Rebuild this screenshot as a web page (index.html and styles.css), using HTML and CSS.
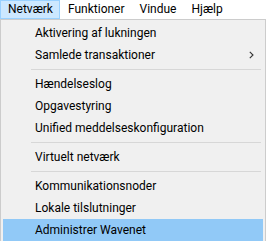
FILE: index.html
```html
<!DOCTYPE html>
<html lang="da">
<head>
<meta charset="utf-8">
<link rel="stylesheet" href="styles.css">
</head>
<body>
<div class="menubar">
  <span class="top active">Netværk</span>
  <span class="top">Funktioner</span>
  <span class="top">Vindue</span>
  <span class="top">Hjælp</span>
</div>
<div class="menu">
  <div class="item">Aktivering af lukningen</div>
  <div class="item sub">Samlede transaktioner<svg class="arrow" width="5" height="8" viewBox="0 0 5 8"><path d="M0.8 0.8 L4 4 L0.8 7.2" fill="none" stroke="#333" stroke-width="1.1"/></svg></div>
  <div class="sep"></div>
  <div class="item">Hændelseslog</div>
  <div class="item">Opgavestyring</div>
  <div class="item">Unified meddelseskonfiguration</div>
  <div class="sep"></div>
  <div class="item">Virtuelt netværk</div>
  <div class="sep"></div>
  <div class="item">Kommunikationsnoder</div>
  <div class="item">Lokale tilslutninger</div>
  <div class="item hover">Administrer Wavenet</div>
</div>
</body>
</html>
```
FILE: styles.css
```css
html, body {
  margin: 0;
  padding: 0;
  background: #ffffff;
  width: 267px;
  height: 241px;
  overflow: hidden;
  font-family: "Segoe UI", Roboto, sans-serif;
  font-size: 12px;
  color: #000;
}
.menubar {
  display: flex;
  height: 19px;
  align-items: stretch;
}
.top {
  display: flex;
  align-items: center;
  padding: 0 6px 1px 7px;
  border: 1px solid transparent;
  box-sizing: border-box;
  line-height: 1;
}
.top.active {
  background: #cce8ff;
  border-color: #99d1ff;
}
.menu {
  width: 266px;
  box-sizing: border-box;
  background: #f0f0f0;
  border: 1px solid #cccccc;
  padding: 2px 2px 0;
}
.item {
  height: 22px;
  display: flex;
  align-items: center;
  padding-left: 32px;
  position: relative;
}
.item.hover {
  background: #91c9f7;
}
.arrow {
  position: absolute;
  right: 9px;
  top: 7px;
}
.sep {
  height: 7px;
  display: flex;
  align-items: center;
  padding-left: 28px;
  padding-right: 2px;
}
.sep::before {
  content: "";
  display: block;
  flex: 1;
  height: 1px;
  background: #d7d7d7;
}
```
